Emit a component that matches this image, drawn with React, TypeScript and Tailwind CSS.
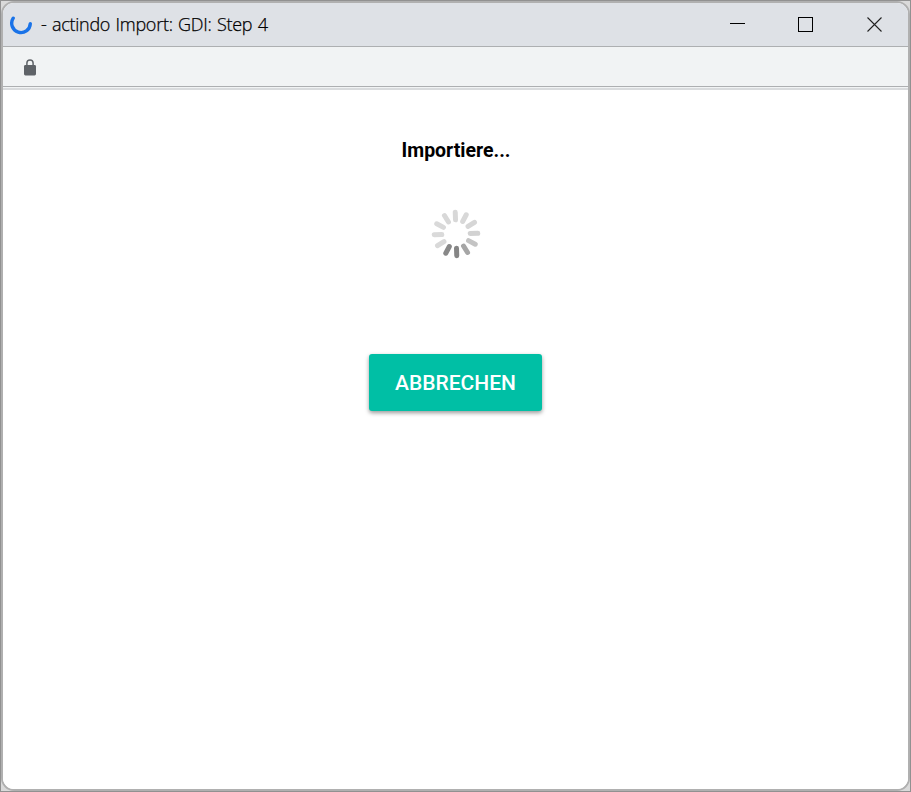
const SPOKES = [
  '#d8d8d8', '#d8d8d8', '#d6d6d6', '#d2d2d2', '#c4c4c4', '#a6a6a6',
  '#858585', '#888888', '#d9d9d9', '#dadada', '#d9d9d9', '#d8d8d8',
];

function LoadingWheel() {
  return (
    <svg className="mt-[43px] block h-[50px] w-[50px]" viewBox="-25 -25 50 50">
      {SPOKES.map((color, i) => (
        <line
          key={i}
          x1="0"
          y1="-14.2"
          x2="0"
          y2="-21.8"
          stroke={color}
          strokeWidth="5"
          strokeLinecap="round"
          transform={`rotate(${i * 30 - 2})`}
        />
      ))}
    </svg>
  );
}

function TitleBar() {
  return (
    <header className="flex h-[44px] shrink-0 items-center border-b border-[#adafb1] bg-[#dee1e6]">
      <svg className="mb-px ml-[6px] h-6 w-6 shrink-0" viewBox="0 0 24 24" fill="none">
        <path d="M4.2 6.2A9.3 9.3 0 1 0 21.3 11.6" stroke="#1a73e8" strokeWidth="3.4" strokeLinecap="round" />
      </svg>
      <h1 className="mb-[2px] ml-2 whitespace-pre font-['Open_Sans','Noto_Sans',sans-serif] text-[18px] font-light leading-6 tracking-[-0.27px] text-black [-webkit-text-stroke:0.25px_black] [word-spacing:1px]">
        - actindo Import: GDI: Step 4
      </h1>
      <div className="mb-[2px] ml-auto flex items-center pr-[25px]">
        <svg className="h-4 w-4" viewBox="0 0 16 16" shapeRendering="crispEdges">
          <path d="M0 7h15v1H0z" fill="#000" />
        </svg>
        <svg className="ml-[52px] h-4 w-4" viewBox="0 0 16 16" fill="none" shapeRendering="crispEdges">
          <path d="M.5 1.5h14v14H.5z" stroke="#000" />
        </svg>
        <svg className="ml-[53px] h-4 w-4" viewBox="0 0 16 16" fill="none">
          <path d="M.5 1.5l14 14M14.5 1.5l-14 14" stroke="#222" strokeWidth="1.1" />
        </svg>
      </div>
    </header>
  );
}

function AddressBar() {
  return (
    <div className="flex h-[43px] shrink-0 flex-col bg-[#f1f3f4]">
      <div className="flex h-[40px] items-center border-b border-[#adafb1]">
        <svg className="ml-[20px] mt-px h-[17px] w-[14px]" viewBox="0 0 14 17" fill="none">
          <rect x="1" y="6" width="12" height="10.5" rx="1.4" fill="#5f6368" />
          <path d="M3.9 7V4.1a3.1 3.1 0 0 1 6.2 0V7" stroke="#5f6368" strokeWidth="1.5" />
        </svg>
      </div>
      <div className="mt-px h-[2px] bg-[#d9dbdd]" />
    </div>
  );
}

export default function App() {
  return (
    <div className="h-[792px] w-[911px] overflow-hidden border border-[#919191] bg-[#dadada]">
      <div className="flex h-[790px] w-[909px] flex-col overflow-hidden rounded-[13px] border-2 border-[#b0b0b0] bg-white">
        <TitleBar />
        <AddressBar />
        <main className="flex flex-1 flex-col items-center bg-white font-[Roboto,sans-serif]">
          <h2 className="mt-[46px] pl-px text-[19.5px] font-bold leading-[30px] text-black">Importiere...</h2>
          <LoadingWheel />
          <button className="mt-[95px] h-[57px] w-[173px] rounded-[3px] bg-[#00bfa5] pt-[2px] text-[21px] font-medium text-white shadow-[0_2px_4px_rgba(0,0,0,0.4)]">
            ABBRECHEN
          </button>
        </main>
      </div>
    </div>
  );
}
